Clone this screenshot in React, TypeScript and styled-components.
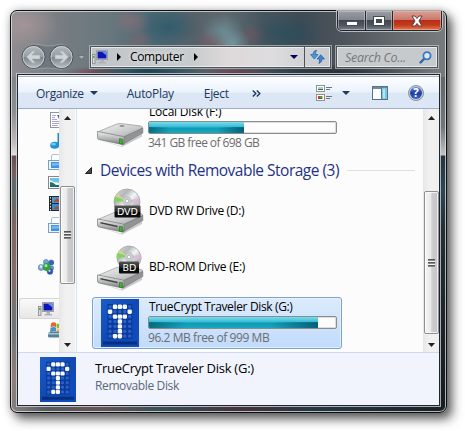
import React from "react";
import styled, { createGlobalStyle, css } from "styled-components";

const Global = createGlobalStyle`
  *, *::before, *::after { box-sizing: border-box; }
  body {
    margin: 0;
    background: #fff;
    overflow: hidden;
    font-family: "Open Sans", "Noto Sans", sans-serif;
    cursor: default;
  }
  svg { display: block; flex: none; }
`;

const Desktop = styled.div`
  width: 465px;
  height: 431px;
  padding: 10px 0 0 10px;
  overflow: hidden;
`;

const Window = styled.div`
  width: 437px;
  height: 403px;
  border: 1px solid #0c0f12;
  border-radius: 7px;
  box-shadow: inset 0 0 0 1px rgba(225, 230, 232, 0.75), 0 0 8px rgba(0, 0, 0, 0.22), 5px 6px 11px rgba(0, 0, 0, 0.62);
  padding: 0 5px 5px;
  background:
    linear-gradient(#828587 0, #8d8e90 35px, #c0b8b9 65px, #e6dddd 78px, #684e50 79px, #76605f 95px, #5d6b6c 110px, #7d6562 150px, #866b69 190px, #6f7575 250px, #907e7b 300px, #817c7b 100%) 0 66px / 6px 330px no-repeat,
    linear-gradient(#63676b 0, #70777b 50px, #c1c4c8 78px, #26343f 79px, #2b4658 115px, #252e35 150px, #151c22 100%) 100% 66px / 6px 330px no-repeat,
    linear-gradient(90deg, #8b8380, #555b60 35px, #655457 90px, #395056 150px, #45323c 230px, #263843 300px, #1c2125 100%) 0 100% / 100% 7px no-repeat,
    radial-gradient(ellipse 22px 16px at 212px 20px, rgba(120, 170, 180, 0.5), transparent),
    radial-gradient(ellipse 20px 14px at 120px 10px, rgba(160, 110, 118, 0.5), transparent),
    radial-gradient(ellipse 30px 20px at 158px 16px, rgba(38, 88, 106, 0.7), transparent),
    radial-gradient(ellipse 16px 14px at 200px 31px, rgba(140, 90, 95, 0.45), transparent),
    radial-gradient(ellipse 16px 14px at 128px 30px, rgba(150, 95, 100, 0.45), transparent),
    radial-gradient(ellipse 18px 14px at 222px 32px, rgba(140, 180, 188, 0.55), transparent),
    radial-gradient(ellipse 36px 18px at 275px 22px, rgba(30, 78, 94, 0.55), transparent),
    radial-gradient(ellipse 14px 12px at 242px 24px, rgba(135, 85, 92, 0.45), transparent),
    radial-gradient(ellipse 34px 24px at 14px 14px, rgba(190, 160, 164, 0.5), transparent),
    radial-gradient(ellipse 60px 9px at 135px 60px, rgba(20, 62, 76, 0.9), transparent),
    radial-gradient(ellipse 34px 7px at 85px 62px, rgba(120, 50, 60, 0.7), transparent),
    radial-gradient(ellipse 40px 7px at 225px 62px, rgba(110, 45, 58, 0.7), transparent),
    radial-gradient(ellipse 90px 8px at 330px 61px, rgba(25, 32, 40, 0.7), transparent),
    linear-gradient(90deg, #8e8c8f 0, #777d82 50px, #67777d 100px, #4b6874 140px, #566169 185px, #5f6a70 215px, #465660 250px, #3d4b55 290px, #4d535a 330px, #676c70 390px, #787b7e 100%);
`;

const TitleBar = styled.header`
  height: 33px;
  display: flex;
  justify-content: flex-end;
  align-items: flex-start;
`;

const CaptionButtons = styled.div`
  display: flex;
  width: 105px;
  height: 20px;
  margin-right: -1px;
  border: 1px solid #20272c;
  border-top: 0;
  border-radius: 0 0 5px 5px;
  box-shadow: 0 0 0 1px rgba(215, 220, 222, 0.75);
  overflow: hidden;
`;

const CaptionButton = styled.div<{ $width: number; $close?: boolean }>`
  width: ${(p) => p.$width}px;
  height: 100%;
  display: grid;
  place-items: center;
  border-right: ${(p) => (p.$close ? "0" : "1px solid #22282d")};
  box-shadow: inset 0 0 0 1px ${(p) => (p.$close ? "rgba(245,180,160,.6)" : "rgba(210,216,220,.5)")};
  background: ${(p) =>
    p.$close
      ? "linear-gradient(#dba197, #c9776b 46%, #b62e17 50%, #c43c1d 75%, #e08058)"
      : "linear-gradient(#9a9da3, #81858c 46%, #42464f 50%, #50565f 75%, #7c838b)"};
`;

const MinimizeGlyph = styled.div`
  margin-top: 5px;
`;

const AddressRow = styled.div`
  height: 26px;
  display: flex;
  align-items: center;
`;

const NavButtons = styled.div`
  width: 60px;
  height: 28px;
  margin-left: 2px;
`;

const glassField = css`
  height: 22px;
  display: flex;
  align-items: center;
  border: 1px solid #4d5458;
  box-shadow: 0 0 0 1px rgba(200, 207, 210, 0.65), inset 0 0 0 1px rgba(245, 247, 248, 0.7);
`;

const Address = styled.div`
  ${glassField};
  width: 241px;
  margin-left: 12px;
  padding-left: 1px;
  background: linear-gradient(90deg, #c2c5c8, #c6cccd 100px, #ded8da 135px, #dddcdf 180px, #c8cacd);
`;

const PlaceIcon = styled.div`
  margin-right: 9px;
`;

const Crumb = styled.span`
  margin: 0 10px 0 9px;
  font-size: 12px;
  line-height: 20px;
  letter-spacing: -0.35px;
  color: #000;
  text-shadow: 0 0 4px #fff;
`;

const AddressEnd = styled.div`
  display: flex;
  align-items: center;
  height: 100%;
  margin-left: auto;
`;

const Refresh = styled.div`
  width: 26px;
  height: 100%;
  margin-left: 6px;
  display: grid;
  place-items: center;
  border-left: 1px solid #4d5458;
`;

const Search = styled.div`
  ${glassField};
  width: 102px;
  margin-left: 5px;
  padding: 0 5px 0 8px;
  justify-content: space-between;
  background: #c7cacc;
  color: #73777a;
  font-size: 12.5px;
  font-style: italic;
`;

const SearchLabel = styled.span`
  letter-spacing: -0.3px;
`;

const Content = styled.main`
  width: 421px;
  height: 330px;
  margin: 5px 0 0 2px;
  display: flex;
  flex-direction: column;
  background: #fcfcfc;
  box-shadow: 0 0 0 1px #20262b, 0 0 0 2px rgba(215, 220, 223, 0.75);
`;

const Toolbar = styled.div`
  height: 34px;
  display: flex;
  align-items: center;
  padding: 3px 0 0 18px;
  color: #1e395b;
  font-size: 12px;
  border-bottom: 1px solid #a0afc9;
  background: linear-gradient(#edf1f8 0 1px, #a9b6ce 1px 2px, #fff 2px 3px, #fafcff 4px, #ebf3fc 17px, #dce7f5 18px, #dce6f4);
`;

const ToolLabel = styled.span<{ $gap: number }>`
  margin-right: ${(p) => p.$gap}px;
  letter-spacing: -0.3px;
`;

const MenuArrow = styled.div`
  margin-right: 29px;
`;

const ToolIcons = styled.div`
  display: flex;
  align-items: center;
  margin-left: auto;
  padding-right: 15px;
`;

const ViewArrow = styled.div`
  margin: 0 22px 0 9px;
`;

const HelpIcon = styled.div`
  margin-left: 20px;
`;

const Body = styled.div`
  height: 243px;
  display: flex;
  overflow: hidden;
`;

const Tree = styled.nav`
  width: 41px;
  height: 252px;
  display: grid;
  grid-auto-rows: 21px;
  overflow: hidden;
`;

const TreeRow = styled.div<{ $indent: number; $selected?: boolean }>`
  display: flex;
  align-items: center;
  padding-left: ${(p) => p.$indent}px;
  overflow: hidden;
  ${(p) =>
    p.$selected &&
    css`
      margin-left: 1px;
      padding-left: ${p.$indent - 2}px;
      border: 1px solid #d6d6d6;
      border-right: 0;
      border-radius: 3px 0 0 3px;
      background: linear-gradient(#fafafa, #e7e7e7);
    `}
`;

const ScrollTrack = styled.div`
  width: 16px;
  height: 243px;
  display: flex;
  flex-direction: column;
  align-items: center;
  padding: 7px 0 5px;
  border-left: 1px solid #e6e6e6;
  background: linear-gradient(90deg, #e9e9e9, #f1f1f1 40%, #f0f0f0);
`;

const Thumb = styled.div<{ $top: number; $height: number }>`
  width: 15px;
  height: ${(p) => p.$height}px;
  margin: ${(p) => p.$top}px 0 auto;
  display: grid;
  place-items: center;
  padding-right: 1px;
  border: 1px solid #8f8f8f;
  border-radius: 2px;
  box-shadow: inset 0 0 0 1px rgba(255, 255, 255, 0.75);
  background: linear-gradient(90deg, #f5f5f5, #e9e9eb 45%, #cfcfd2 52%, #c3c3c7);
`;

const Grip = styled.div`
  width: 7px;
  height: 8px;
  background: repeating-linear-gradient(#555 0 1px, #8b8b8b 1px 2px, #f4f4f4 2px 3px);
`;

const Splitter = styled.div`
  width: 2px;
  border-right: 1px solid #d5e3f2;
`;

const FileList = styled.section`
  flex: 1;
  min-width: 0;
  padding: 0 0 0 15px;
`;

const DriveItem = styled.div<{ $selected?: boolean; $first?: boolean }>`
  width: 250px;
  height: 52px;
  margin: ${(p) => (p.$first ? "-7px" : "0")} 0 4px;
  display: flex;
  border: 1px solid ${(p) => (p.$selected ? "#7da2ce" : "transparent")};
  border-radius: 3px;
  ${(p) =>
    p.$selected &&
    css`
      box-shadow: inset 0 0 0 1px rgba(240, 247, 255, 0.7);
      background: linear-gradient(#dcebfc, #c1dbfc);
    `}
`;

const IconCell = styled.div<{ $inset?: number }>`
  width: 55px;
  display: flex;
  align-items: center;
  padding-left: ${(p) => p.$inset ?? 3}px;
`;

const DriveText = styled.div<{ $centered?: boolean }>`
  display: flex;
  flex-direction: column;
  justify-content: ${(p) => (p.$centered ? "center" : "flex-start")};
  padding-top: ${(p) => (p.$centered ? "0" : "1px")};
  white-space: nowrap;
`;

const DriveName = styled.span<{ $track: number }>`
  padding-left: 1px;
  font-size: 12px;
  line-height: 16px;
  margin-bottom: 1px;
  letter-spacing: ${(p) => p.$track}px;
  color: #000;
`;

const FreeSpace = styled(DriveName)`
  padding-left: 0;
  color: #6d6d6d;
  margin-top: 1px;
`;

const Capacity = styled.div`
  width: 189px;
  height: 13px;
  border: 1px solid #8c8c8c;
  border-radius: 2px;
  background: #fcfcfc;
  box-shadow: inset 0 0 0 1px rgba(190, 190, 190, 0.5);
  overflow: hidden;
`;

const Used = styled.div`
  height: 100%;
  background:
    linear-gradient(90deg, rgba(0, 70, 90, 0.6), transparent 22%, transparent 72%, rgba(0, 60, 85, 0.65)) 0 100% / 100% 6px no-repeat,
    linear-gradient(#79dcea 0, #35bad6 5px, #0d9ab5 6px, #17a9bd 100%);
`;

const GroupHeader = styled.h2`
  height: 27px;
  margin: 0 8px 0 -7px;
  padding-bottom: 3px;
  display: flex;
  align-items: center;
  font-size: 15.5px;
  font-weight: 400;
  color: #1e3287;
  white-space: nowrap;
`;

const GroupTitle = styled.span`
  margin: 0 8px;
  letter-spacing: -0.5px;
`;

const Rule = styled.div`
  flex: 1;
  height: 1px;
  background: #e0e1e6;
`;

const Details = styled.footer`
  height: 53px;
  display: flex;
  padding: 4px 0 0 22px;
  border-top: 1px solid #ccdaec;
  background: #f1f4fc;
`;

const DetailsText = styled.div`
  padding: 1px 0 0 19px;
  display: flex;
  flex-direction: column;
`;

const DetailsName = styled.span`
  font-size: 13px;
  line-height: 20px;
  letter-spacing: -0.26px;
`;

const DetailsKind = styled.span`
  margin-top: -1px;
  font-size: 12px;
  line-height: 17px;
  letter-spacing: -0.38px;
  color: #5a6779;
`;

type ArrowProps = { dir: "up" | "down" | "right"; color?: string; w?: number; h?: number };

function Arrow({ dir, color = "#222", w = 8, h = 4 }: ArrowProps) {
  const pts =
    dir === "down" ? `0,0 ${w},0 ${w / 2},${h}` : dir === "up" ? `0,${h} ${w},${h} ${w / 2},0` : `0,0 ${w},${h / 2} 0,${h}`;
  return (
    <svg width={w} height={h}>
      <polygon points={pts} fill={color} />
    </svg>
  );
}

function BackForward() {
  return (
    <svg width="70" height="28" viewBox="0 0 70 28">
      <defs>
        <linearGradient id="orb" x2="0" y2="1">
          <stop offset="0" stopColor="#b3babd" />
          <stop offset=".48" stopColor="#969fa4" />
          <stop offset=".52" stopColor="#7b858c" />
          <stop offset="1" stopColor="#b9c2c6" />
        </linearGradient>
      </defs>
      <path d="M15 1Q20 1 29 3Q37 3 43 1A13 13 0 0 1 43 26.500Q34 25 29 25Q23 25 15 26.500A13 13 0 0 1 15 1Z" fill="#68727a" fillOpacity=".65" stroke="#a0a8ac" strokeOpacity=".7" />
      {[15.5, 43.5].map((x) => (
        <g key={x}>
          <circle cx={x} cy="14" r="11.5" fill="url(#orb)" stroke="#495158" />
          <circle cx={x} cy="14" r="10.5" fill="none" stroke="#d5dbde" strokeOpacity=".75" />
        </g>
      ))}
      <path d="M8.500 14l6-6h3l-3.500 4h8v4h-8l3.500 4h-3zM50.500 14l-6-6h-3l3.500 4h-8v4h8l-3.500 4h3z" fill="#d1d5d7" stroke="#a6adb1" strokeWidth=".6" />
      <path d="M60 12.500h7l-3.500 4z" fill="#a7afb2" stroke="#555e63" strokeWidth=".6" />
    </svg>
  );
}

function ComputerIcon() {
  return (
    <svg width="16" height="14" viewBox="0 0 16 14">
      <rect x=".5" y="4.500" width="2.500" height="9" fill="#d9dadb" stroke="#85888a" strokeWidth=".8" />
      <rect x="1" y="6" width="1.500" height="2" fill="#40c02c" />
      <rect x="4.500" y=".5" width="11" height="9" fill="#d7dade" stroke="#9a9fa8" />
      <rect x="5.500" y="1.500" width="9" height="7" fill="#0c16b4" />
      <path d="M9.500 1.500h5v4z" fill="#6d8cf0" />
      <path d="M8.500 10h3.500v2h2v1.500H6.500V12h2z" fill="#b0b3b6" />
    </svg>
  );
}

function RefreshIcon() {
  return (
    <svg width="15" height="14" viewBox="0 0 15 14">
      <path d="M6.500 0Q3 1 2.800 4.500H.5L4.300 9 8 4.500H5.500Q5.500 2.500 6.500 0Z" fill="#4b97dc" stroke="#2263ac" strokeWidth=".7" />
      <path d="M9 13.500Q12 12 12.200 9H14.500L10.700 4.800 7 9H9.500Q9.700 11.500 9 13.500Z" fill="#4183cc" stroke="#1d579f" strokeWidth=".7" />
    </svg>
  );
}

function SearchIcon() {
  return (
    <svg width="13" height="13" viewBox="0 0 13 13">
      <path d="M1.500 11.500L6 7" stroke="#3464aa" strokeWidth="2.400" strokeLinecap="round" />
      <circle cx="8" cy="4.800" r="3.600" fill="#dbe9f5" stroke="#3779c2" strokeWidth="1.800" />
    </svg>
  );
}

function ViewsIcon() {
  return (
    <svg width="17" height="16" viewBox="0 0 17 16">
      <rect x=".5" y=".5" width="8" height="6" fill="#fff" stroke="#98917f" />
      <rect x="2" y="2" width="5" height="2" fill="#9dd4ec" />
      <rect x="2" y="4" width="5" height="1" fill="#286f58" />
      <rect x=".5" y="9.500" width="8" height="6" fill="#fff" stroke="#98917f" />
      <path d="M2 11h2v2H2z" fill="#df3d31" />
      <path d="M4 11h2v2H4z" fill="#39a942" />
      <path d="M6 11h1v3H6z" fill="#eec32b" />
      <path d="M2 13h4v1H2z" fill="#3d56bc" />
      <path d="M10 2.500h6M10 4.500h4M10 11.500h6M10 13.500h4" stroke="#6b7786" />
    </svg>
  );
}

function PaneIcon() {
  return (
    <svg width="16" height="14" viewBox="0 0 16 14">
      <rect x=".5" y=".5" width="15" height="13" fill="#fff" stroke="#59718c" />
      <rect x="1" y="1" width="14" height="2" fill="#7388a2" />
      <rect x="9" y="1" width="1" height="12" fill="#59718c" />
      <rect x="10" y="2" width="5" height="11" fill="#73c9e3" />
      <rect x="11" y="3" width="2" height="9" fill="#aee5f2" />
    </svg>
  );
}

function HelpBadge() {
  return (
    <svg width="16" height="16" viewBox="0 0 16 16">
      <defs>
        <linearGradient id="help" x2="0" y2="1">
          <stop stopColor="#5d8be0" />
          <stop offset=".5" stopColor="#1d3d9c" />
          <stop offset="1" stopColor="#3566cc" />
        </linearGradient>
      </defs>
      <circle cx="8" cy="8" r="7.500" fill="#c9ccd3" stroke="#777c88" strokeWidth=".8" />
      <circle cx="8" cy="8" r="6" fill="url(#help)" />
      <text x="8" y="12.200" textAnchor="middle" fontSize="11.500" fontWeight="700" fontFamily="Open Sans, sans-serif" fill="#fff">?</text>
    </svg>
  );
}

function DocIcon() {
  return (
    <svg width="12" height="16" viewBox="0 0 12 16">
      <rect x=".5" y=".5" width="12" height="15" fill="#fff" stroke="#93969b" />
      <path d="M2 3.500h4M2 5.500h3M2 7.500h5M2 9.500h7M2 11.500h7M2 13.500h6" stroke="#a9a2dc" />
      <path d="M7 3h5v4H9z" fill="#2f6f8f" />
    </svg>
  );
}

function MusicIcon() {
  return (
    <svg width="12" height="16" viewBox="0 0 12 16">
      <path d="M7.500 0h1.500v12H7.500z" fill="#2387cc" />
      <path d="M9 0q0 3 3 5v4q-1-3-3-4z" fill="#2387cc" />
      <ellipse cx="4.800" cy="12.300" rx="4.600" ry="3.500" fill="#2291d3" />
      <ellipse cx="3.600" cy="11.200" rx="2.400" ry="1.400" fill="#70c8ee" />
    </svg>
  );
}

function LibraryIcon() {
  return (
    <svg width="14" height="16" viewBox="0 0 14 16">
      <path d="M3.500 6V2q0-1.500 1.500-1.500h9V6" fill="#fbfdff" stroke="#a9c3dd" />
      <rect x=".5" y="6.500" width="15" height="9" fill="#edf5fc" stroke="#7e9ebd" />
      <rect x="3" y="8" width="12" height="6" fill="#3f92e4" />
      <path d="M4 9h10v2L4 12z" fill="#75b7f3" />
    </svg>
  );
}

function PictureIcon() {
  return (
    <svg width="14" height="13" viewBox="0 0 14 13">
      <rect x=".5" y=".5" width="15" height="12" fill="#fff" stroke="#84878a" />
      <rect x="2" y="2" width="12" height="9" fill="#6fc0ee" />
      <path d="M2 4q5 3 12 3v3H2z" fill="#eaf6fc" />
      <path d="M2 6q3 0 6 3h6v2H2z" fill="#227650" />
      <path d="M2 10h12v1H2z" fill="#1c55a6" />
    </svg>
  );
}

function FilmIcon() {
  return (
    <svg width="13" height="15" viewBox="0 0 13 15">
      <rect width="13" height="15" fill="#22272b" />
      <rect x="3" y="1" width="10" height="6" fill="#3f9bdb" />
      <rect x="3" y="8" width="10" height="6" fill="#3889cc" />
      <path d="M4 6l4-4 4 4zM4 13l4-3 4 3z" fill="#b24832" />
      <path d="M1.500 1v14" stroke="#e2e6e8" strokeDasharray="1.500 1.500" />
    </svg>
  );
}

function HomegroupIcon() {
  return (
    <svg width="16" height="16" viewBox="0 0 16 16">
      <g stroke="#2c4e9e" strokeWidth=".4">
        <circle cx="8" cy="3" r="2.600" fill="#6fa3df" />
        <circle cx="13.300" cy="3.500" r="2.600" fill="#3764bd" />
        <circle cx="3.200" cy="8.500" r="3" fill="#7ea8de" />
        <circle cx="13.500" cy="9" r="2.300" fill="#658fd4" />
        <circle cx="12" cy="12.500" r="2.900" fill="#3158b0" />
      </g>
      <circle cx="8.800" cy="8" r="4" fill="#31a03a" />
      <circle cx="3" cy="7.600" r="1.300" fill="#dceafc" />
      <circle cx="8" cy="6.700" r="1.600" fill="#a1e390" />
      <circle cx="11.500" cy="11.800" r="1.100" fill="#c5dafa" />
    </svg>
  );
}

function SystemDriveIcon() {
  return (
    <svg width="16" height="16" viewBox="0 0 16 16">
      <path d="M3 1.500Q5-.5 8 1v4Q5 4 2.500 5.500Z" fill="#e8642d" />
      <path d="M8.500 1.500q3 1 5 0l-.5 4q-2 1-4.500 0z" fill="#7bbb39" />
      <path d="M2.500 6Q5 4.500 8 5.500v4Q5 9 2 10z" fill="#3f92d8" />
      <path d="M8.500 6q2 1 4.500 0l-.5 4q-2 1-4 0z" fill="#f5bd32" />
      <path d="M0 11L3 9.500h12v6H1Q0 15 0 14z" fill="#578296" />
      <path d="M0 11h15v1.500H0z" fill="#a4c4cf" />
    </svg>
  );
}

function SmallDriveIcon() {
  return (
    <svg width="16" height="12" viewBox="0 0 16 12">
      <path d="M0 10L4 7.500h12V12H0z" fill="#c6c7c8" stroke="#8d8f91" />
    </svg>
  );
}

/** Hard disk enclosure, optionally carrying an optical disc with a format label. */
function DriveIcon({ disc }: { disc?: "DVD" | "BD" }) {
  const dx = disc === "BD" ? 2 : 0;
  return (
    <svg width="48" height="50" viewBox="0 0 48 50">
      <defs>
        <linearGradient id="top" x2="1" y2="1">
          <stop stopColor="#f3f3f3" />
          <stop offset=".6" stopColor="#c8c9ca" />
          <stop offset="1" stopColor="#929394" />
        </linearGradient>
        <linearGradient id="front" x2="0" y2="1">
          <stop stopColor="#eee" />
          <stop offset=".5" stopColor="#b9babb" />
          <stop offset="1" stopColor="#777" />
        </linearGradient>
        <linearGradient id="disc" x2="1" y2="1">
          <stop stopColor="#e1e3e3" />
          <stop offset=".3" stopColor="#b4b7b8" />
          <stop offset=".5" stopColor="#f4f5f5" />
          <stop offset=".75" stopColor="#b4b7b9" />
          <stop offset="1" stopColor="#dedfdf" />
        </linearGradient>
        <linearGradient id="label" x2="0" y2="1">
          <stop stopColor="#555" />
          <stop offset=".5" stopColor="#252525" />
          <stop offset=".55" stopColor="#070707" />
          <stop offset="1" stopColor="#111" />
        </linearGradient>
      </defs>
      <g transform={disc ? "translate(0 2)" : "translate(0 -2.5)"}>
        <path d="M5 40L25 45.500L46 33.500L46 36L26 46.500Z" fill="#999" opacity=".5" />
        <path d="M1.500 31.500L20 23.800Q23 22.700 26 23.200L45 25.500Q47 26 46.500 28L28 37.500Z" fill="url(#top)" stroke="#959697" strokeWidth=".7" />
        <path d="M27.500 36.500L46.800 27.500V32.500L27 44Z" fill="#929394" stroke="#707172" strokeWidth=".6" />
        <path d="M1.500 31.500Q1 31 2 31L27 36Q28.500 36.500 28 38.500V43Q28 44.500 26 44L3 39Q1.500 38.500 1.500 37Z" fill="url(#front)" stroke="#77787a" strokeWidth=".7" />
        {disc && <path d="M4.500 34L21.500 37.800V39.300L4.500 35.500Z" fill="#414243" />}
        <path d="M23.500 38.200L26.300 38.700V43.500L23.500 43Z" fill="#2fc21c" stroke="#276e1e" strokeWidth=".6" />
        {!disc && <ellipse cx="26" cy="25.500" rx="2.600" ry="1" fill="#929496" />}
      </g>
      {disc && (
        <g transform={`translate(${dx} 0)`}>
          <circle cx="31" cy="16" r={disc === "BD" ? 12 : 13} fill="url(#disc)" stroke="#9a9c9d" strokeWidth=".7" />
          <path d="M31 15L19 11Q18.500 13 18.500 16Z" fill="#76d94b" opacity=".85" />
          <path d="M31 15L21 7.500 19.500 10Z" fill="#e2e465" opacity=".6" />
          <path d="M31 15L43 12Q44 16 43.500 18Z" fill="#ddb7d4" opacity=".8" />
          <circle cx="31" cy="15" r="4.200" fill="#cfd3d4" stroke="#a4a8aa" strokeWidth=".6" />
          <circle cx="31" cy="15" r="1.800" fill="#fff" stroke="#929597" strokeWidth=".6" />
          <rect x={disc === "BD" ? 21 : 18.500} y="19.500" width={disc === "BD" ? 20 : 26} height="12" rx="1" fill="url(#label)" />
          <text x="31.400" y="29" textAnchor="middle" fontSize="9.500" fontFamily="DejaVu Sans, sans-serif" fill="#fff">
            {disc}
          </text>
        </g>
      )}
    </svg>
  );
}

const matrixRows = ["01110", "10001", "01110", "00100", "00100", "00100", "01100"];

/** TrueCrypt logo: a blue plate with an LED dot matrix lit in the shape of a key. */
function TrueCryptIcon({ width, height }: { width: number; height: number }) {
  return (
    <svg width={width} height={height} viewBox="0 0 38 48" preserveAspectRatio="none">
      <defs>
        <linearGradient id="plate" x2="1" y2="1">
          <stop stopColor="#1c5cc8" />
          <stop offset=".5" stopColor="#1049b4" />
          <stop offset="1" stopColor="#0e4cbe" />
        </linearGradient>
      </defs>
      <rect width="38" height="48" fill="url(#plate)" />
      <path d="M2 42.500h34v3H2z" fill="#06307f" />
      <rect x="6.500" y="5" width="24.800" height="35" fill="#0c3a9a" />
      {matrixRows.map((row, r) =>
        row.split("").map((cell, c) => {
          const lit = cell === "1";
          const size = lit ? 4.4 : 3.2;
          return (
            <rect
              key={`${r}-${c}`}
              x={9.1 + c * 4.9 - size / 2}
              y={7.8 + r * 4.9 - size / 2}
              width={size}
              height={size}
              rx="1.3"
              fill={lit ? "#f5fbff" : "#2763cb"}
            />
          );
        })
      )}
    </svg>
  );
}

const tree: { icon?: React.ReactNode; indent: number; selected?: boolean }[] = [
  { icon: <DocIcon />, indent: 32 },
  { icon: <MusicIcon />, indent: 32 },
  { icon: <LibraryIcon />, indent: 30 },
  { icon: <PictureIcon />, indent: 30 },
  { icon: <FilmIcon />, indent: 31 },
  { icon: <LibraryIcon />, indent: 30 },
  { indent: 0 },
  { icon: <HomegroupIcon />, indent: 20 },
  { indent: 0 },
  { icon: <ComputerIcon />, indent: 20, selected: true },
  { icon: <SystemDriveIcon />, indent: 30 },
  { icon: <SmallDriveIcon />, indent: 30 },
];

function Scrollbar({ top, height }: { top: number; height: number }) {
  return (
    <ScrollTrack>
      <Arrow dir="up" w={7} />
      <Thumb $top={top} $height={height}>
        <Grip />
      </Thumb>
      <Arrow dir="down" w={7} />
    </ScrollTrack>
  );
}

function CapacityBar({ percent }: { percent: number }) {
  return (
    <Capacity>
      <Used style={{ width: `${percent}%` }} />
    </Capacity>
  );
}

export default function App() {
  return (
    <Desktop>
      <Global />
      <Window>
        <TitleBar>
          <CaptionButtons>
            <CaptionButton $width={28}>
              <MinimizeGlyph>
                <svg width="12" height="5">
                  <rect x=".5" y=".5" width="11" height="4" fill="#fff" stroke="#4a4f56" />
                </svg>
              </MinimizeGlyph>
            </CaptionButton>
            <CaptionButton $width={27}>
              <svg width="12" height="10">
                <rect x="2" y="2" width="8" height="6" fill="none" stroke="#454a51" strokeWidth="4" />
                <rect x="2" y="2" width="8" height="6" fill="none" stroke="#fff" strokeWidth="2" />
              </svg>
            </CaptionButton>
            <CaptionButton $width={48} $close>
              <svg width="14" height="12" viewBox="0 0 14 12">
                <path d="M2 1h3l2 2.500L9 1h3L9 6l3 5H9L7 8.500 5 11H2l3-5z" fill="#fff" stroke="#5c4248" strokeWidth="1" />
              </svg>
            </CaptionButton>
          </CaptionButtons>
        </TitleBar>

        <AddressRow>
          <NavButtons>
            <BackForward />
          </NavButtons>
          <Address>
            <PlaceIcon>
              <ComputerIcon />
            </PlaceIcon>
            <Arrow dir="right" w={4} h={8} color="#000" />
            <Crumb>Computer</Crumb>
            <Arrow dir="right" w={4} h={8} color="#000" />
            <AddressEnd>
              <Arrow dir="down" color="#00005c" />
              <Refresh>
                <RefreshIcon />
              </Refresh>
            </AddressEnd>
          </Address>
          <Search>
            <SearchLabel>Search Co...</SearchLabel>
            <SearchIcon />
          </Search>
        </AddressRow>

        <Content>
          <Toolbar>
            <ToolLabel $gap={6}>Organize</ToolLabel>
            <MenuArrow>
              <Arrow dir="down" color="#1e395b" />
            </MenuArrow>
            <ToolLabel $gap={30}>AutoPlay</ToolLabel>
            <ToolLabel $gap={23}>Eject</ToolLabel>
            <svg width="9" height="7" viewBox="0 0 9 7">
              <path d="M.8 .5l3 3-3 3M4.800 .5l3 3-3 3" fill="none" stroke="#1e395b" strokeWidth="1.400" />
            </svg>
            <ToolIcons>
              <ViewsIcon />
              <ViewArrow>
                <Arrow dir="down" color="#1e395b" />
              </ViewArrow>
              <PaneIcon />
              <HelpIcon>
                <HelpBadge />
              </HelpIcon>
            </ToolIcons>
          </Toolbar>

          <Body>
            <Tree>
              {tree.map((row, i) => (
                <TreeRow key={i} $indent={row.indent} $selected={row.selected}>
                  {row.icon}
                </TreeRow>
              ))}
            </Tree>
            <Scrollbar top={66} height={98} />
            <Splitter />
            <FileList>
              <DriveItem $first>
                <IconCell>
                  <DriveIcon />
                </IconCell>
                <DriveText>
                  <DriveName $track={-0.2}>Local Disk (F:)</DriveName>
                  <CapacityBar percent={51} />
                  <FreeSpace $track={-0.58}>341 GB free of 698 GB</FreeSpace>
                </DriveText>
              </DriveItem>
              <GroupHeader>
                <svg width="7" height="7">
                  <path d="M6.500 .5v6h-6z" fill="#4a4a4a" stroke="#222" />
                </svg>
                <GroupTitle>Devices with Removable Storage (3)</GroupTitle>
                <Rule />
              </GroupHeader>
              <DriveItem>
                <IconCell>
                  <DriveIcon disc="DVD" />
                </IconCell>
                <DriveText $centered>
                  <DriveName $track={-0.32}>DVD RW Drive (D:)</DriveName>
                </DriveText>
              </DriveItem>
              <DriveItem>
                <IconCell>
                  <DriveIcon disc="BD" />
                </IconCell>
                <DriveText $centered>
                  <DriveName $track={-0.25}>BD-ROM Drive (E:)</DriveName>
                </DriveText>
              </DriveItem>
              <DriveItem $selected>
                <IconCell $inset={8}>
                  <TrueCryptIcon width={38} height={48} />
                </IconCell>
                <DriveText>
                  <DriveName $track={-0.35}>TrueCrypt Traveler Disk (G:)</DriveName>
                  <CapacityBar percent={90.5} />
                  <FreeSpace $track={-0.43}>96.2 MB free of 999 MB</FreeSpace>
                </DriveText>
              </DriveItem>
            </FileList>
            <Scrollbar top={71} height={143} />
          </Body>

          <Details>
            <TrueCryptIcon width={36} height={45} />
            <DetailsText>
              <DetailsName>TrueCrypt Traveler Disk (G:)</DetailsName>
              <DetailsKind>Removable Disk</DetailsKind>
            </DetailsText>
          </Details>
        </Content>
      </Window>
    </Desktop>
  );
}
